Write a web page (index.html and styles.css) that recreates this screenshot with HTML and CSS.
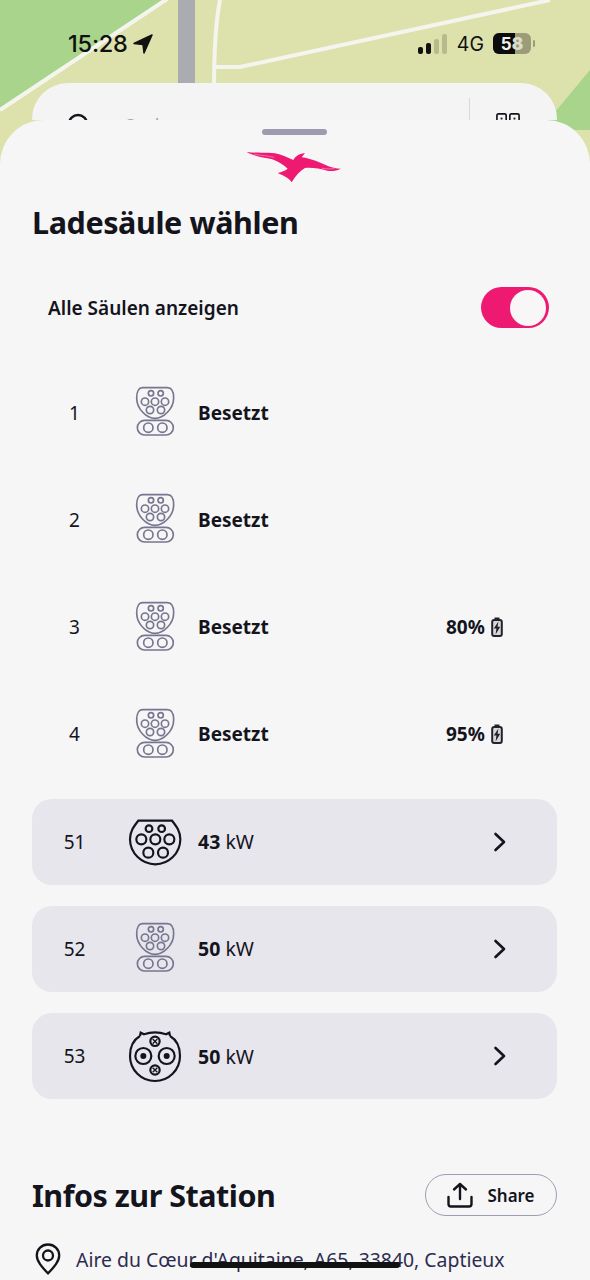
FILE: index.html
```html
<!DOCTYPE html>
<html lang="de">
<head>
<meta charset="utf-8">
<title>Ladesäule wählen</title>
<link rel="stylesheet" href="styles.css">
</head>
<body>
<svg class="defs" width="0" height="0" aria-hidden="true">
  <symbol id="combo" viewBox="0 0 150 165">
    <g fill="none" stroke="#77758f" stroke-width="5">
      <path d="M38 8H112C124 8 131 20 131 38C131 72 100 100 75 100C50 100 20 72 20 38C20 20 27 8 38 8Z"/>
      <circle cx="63" cy="25" r="8"/><circle cx="92" cy="25" r="8"/>
      <circle cx="45" cy="50" r="11"/><circle cx="75" cy="50" r="11"/><circle cx="105" cy="50" r="11"/>
      <circle cx="60" cy="75" r="11"/><circle cx="93" cy="75" r="11"/>
      <rect x="22" y="106" width="108" height="44" rx="22"/>
      <circle cx="55" cy="128" r="14"/><circle cx="97" cy="128" r="14"/>
    </g>
  </symbol>
  <symbol id="type2" viewBox="0 0 210 180">
    <g fill="none" stroke="#14141c" stroke-width="6.5">
      <path d="M55 26H156C170 44 181 58 181 82C181 124 146 157 106 157C66 157 30 124 30 82C30 58 41 44 55 26Z"/>
      <circle cx="87" cy="50" r="10"/><circle cx="125" cy="50" r="10"/>
      <circle cx="64" cy="82" r="15"/><circle cx="106" cy="82" r="15"/><circle cx="148" cy="82" r="15"/>
      <circle cx="85" cy="122" r="15"/><circle cx="129" cy="122" r="15"/>
    </g>
  </symbol>
  <symbol id="ccs" viewBox="0 0 210 180">
    <g fill="none" stroke="#14141c" stroke-width="6.5">
      <path d="M60 30C36 44 30 68 30 90C30 132 64 165 105 165C146 165 180 132 180 90C180 68 174 44 150 30"/>
      <path d="M60 30L62 20L72 25C92 18 118 18 138 25L148 20L150 30"/>
      <circle cx="105" cy="46" r="14"/><path d="M98 39L112 53M112 39L98 53" stroke-width="4"/>
      <circle cx="105" cy="132" r="14"/><path d="M98 125L112 139M112 125L98 139" stroke-width="4"/>
      <circle cx="70" cy="90" r="24"/><circle cx="140" cy="90" r="24"/>
    </g>
    <circle cx="70" cy="90" r="9" fill="#14141c"/><circle cx="140" cy="90" r="9" fill="#14141c"/>
  </symbol>
  <symbol id="chevron" viewBox="0 0 14 20">
    <path d="M2.5 2L11 10L2.5 18" fill="none" stroke="#14141c" stroke-width="2.6" stroke-linecap="round" stroke-linejoin="round"/>
  </symbol>
  <symbol id="charging" viewBox="0 0 12 20">
    <path d="M3.5 0.5H8.5V3H3.5Z" fill="#222228"/>
    <rect x="1.2" y="3" width="9.6" height="16" rx="2" fill="#d8d8dc" stroke="#222228" stroke-width="2"/>
    <path d="M7.4 4.5L2.8 11.5H5.4L4.6 17.5L9.2 9.8H6.6Z" fill="#222228"/>
  </symbol>
</svg>

<div class="phone">
  <svg class="map" viewBox="0 0 590 130" width="590" height="130" aria-hidden="true">
    <rect width="590" height="130" fill="#dde2ad"/>
    <path d="M0 0H165L0 110Z" fill="#a9d48b"/>
    <path d="M590 70L540 130H590Z" fill="#a9d48b"/>
    <path d="M167 -1L0 110" stroke="#f4f5ef" stroke-width="4" fill="none"/>
    <rect x="178" y="0" width="17" height="90" fill="#abacb2"/>
    <path d="M220 0C216 20 214 50 214 90M214 67H240L550 0" stroke="#f4f5ef" stroke-width="4" fill="none"/>
  </svg>

  <header class="status">
    <div class="status-left">
      <span class="time">15:28</span>
      <svg class="arrow" viewBox="0 0 20 20" width="20" height="20"><path d="M19 1L1 9.5L10 10.5L11 19Z" fill="#111" stroke="#111" stroke-width="1.5" stroke-linejoin="round"/></svg>
    </div>
    <div class="status-right">
      <div class="bars">
        <i class="bar on b1"></i><i class="bar on b2"></i><i class="bar b3"></i><i class="bar b4"></i>
      </div>
      <span class="net">4G</span>
      <div class="battery"><span class="battery-fill"></span><span class="battery-text">5<b>8</b></span></div>
      <i class="battery-nub"></i>
    </div>
  </header>

  <div class="search">
    <svg class="search-icon" viewBox="0 0 24 24" width="24" height="24"><circle cx="11" cy="11" r="9" fill="none" stroke="#14141c" stroke-width="2.4"/></svg>
    <span class="search-text">Suchen</span>
    <span class="search-div"></span>
    <svg class="qr-icon" viewBox="0 0 26 26" width="24" height="24"><g fill="none" stroke="#14141c" stroke-width="1.8"><rect x="1" y="1" width="10" height="10" rx="1.5"/><rect x="15" y="1" width="10" height="10" rx="1.5"/></g><rect x="5" y="5" width="2" height="2" fill="#14141c"/><rect x="19" y="5" width="2" height="2" fill="#14141c"/></svg>
  </div>

  <main class="sheet">
    <div class="handle"></div>
    <svg class="logo" viewBox="0 0 330 120" width="110" height="40" aria-hidden="true">
      <path d="M20 12C50 16 80 12 105 16C125 20 145 30 160 36C165 27 174 18 195 15L185 28C215 32 240 44 262 53C275 58 288 61 303 62C290 68 275 71 262 68C240 62 215 58 195 60C180 68 168 82 155 103C150 93 135 84 113 75C125 72 135 68 143 62C130 50 115 40 95 33C70 28 40 24 20 12Z" fill="#ee1a72"/>
      <path d="M42 19C65 22 85 24 103 28M245 61C258 63 272 63 284 62" fill="none" stroke="#f9c6dc" stroke-width="1.5"/>
    </svg>
    <h1 class="title">Ladesäule wählen</h1>

    <div class="toggle-row">
      <span class="toggle-label">Alle Säulen anzeigen</span>
      <span class="toggle"><i class="knob"></i></span>
    </div>

    <div class="list">
      <div class="row"><span class="num">1</span><svg class="plug"><use href="#combo"/></svg><span class="state">Besetzt</span></div>
      <div class="row"><span class="num">2</span><svg class="plug"><use href="#combo"/></svg><span class="state">Besetzt</span></div>
      <div class="row"><span class="num">3</span><svg class="plug"><use href="#combo"/></svg><span class="state">Besetzt</span><span class="soc">80%<svg class="soc-icon"><use href="#charging"/></svg></span></div>
      <div class="row"><span class="num">4</span><svg class="plug"><use href="#combo"/></svg><span class="state">Besetzt</span><span class="soc">95%<svg class="soc-icon"><use href="#charging"/></svg></span></div>
      <div class="row free"><span class="num">51</span><svg class="plug wide"><use href="#type2"/></svg><span class="power"><b>43</b> kW</span><svg class="chev"><use href="#chevron"/></svg></div>
      <div class="row free"><span class="num">52</span><svg class="plug"><use href="#combo"/></svg><span class="power"><b>50</b> kW</span><svg class="chev"><use href="#chevron"/></svg></div>
      <div class="row free"><span class="num">53</span><svg class="plug wide"><use href="#ccs"/></svg><span class="power"><b>50</b> kW</span><svg class="chev"><use href="#chevron"/></svg></div>
    </div>

    <div class="info-head">
      <h2 class="info-title">Infos zur Station</h2>
      <button class="share" type="button">
        <svg viewBox="0 0 26 26" width="26" height="26" aria-hidden="true"><path d="M13 17V2M7 7.5L13 2L19 7.5M1.5 15V22C1.5 23.5 2.5 24.5 4 24.5H22C23.5 24.5 24.5 23.5 24.5 22V15" fill="none" stroke="#14141c" stroke-width="2.4" stroke-linecap="round" stroke-linejoin="round"/></svg>
        <span>Share</span>
      </button>
    </div>
    <div class="address">
      <svg viewBox="0 0 26 32" width="26" height="32" aria-hidden="true"><path d="M13 30.5C7 24 1.8 18.5 1.8 12.5C1.8 6 6.8 1.5 13 1.5C19.2 1.5 24.2 6 24.2 12.5C24.2 18.5 19 24 13 30.5Z" fill="none" stroke="#14141c" stroke-width="2.3" stroke-linejoin="round"/><circle cx="13" cy="12.5" r="5" fill="none" stroke="#14141c" stroke-width="2.3"/></svg>
      <span>Aire du Cœur d'Aquitaine, A65, 33840, Captieux</span>
    </div>
  </main>
  <div class="home"></div>
</div>
</body>
</html>
```
FILE: styles.css
```css
* { box-sizing: border-box; }
html, body { margin: 0; padding: 0; }
body { width: 590px; height: 1280px; overflow: hidden; font-family: "Noto Sans", sans-serif; color: #14141c; }
.defs { position: absolute; }
.phone { position: relative; width: 590px; height: 1280px; overflow: hidden; background: #dde2ad; }
.map { position: absolute; left: 0; top: 0; display: block; }

.status { position: relative; height: 83px; display: flex; justify-content: space-between; padding: 30px 55px 0 68px; }
.status-left { display: flex; align-items: center; gap: 5px; height: 27px; }
.time { font-family: Inter, sans-serif; font-weight: 500; font-size: 23.5px; letter-spacing: -0.2px; color: #111; }
.status-right { display: flex; align-items: center; height: 27px; }
.bars { display: flex; align-items: flex-end; gap: 3px; margin-right: 10px; margin-left: -3px; }
.bar { display: block; width: 5px; border-radius: 2px; background: #b6bb8c; }
.bar.on { background: #111; }
.b1 { height: 7px; } .b2 { height: 11px; } .b3 { height: 15px; } .b4 { height: 20px; }
.net { font-family: Inter, sans-serif; font-size: 19.5px; color: #111; margin-right: 9px; }
.battery { position: relative; width: 38px; height: 21px; border-radius: 6px; background: #9a9d78; overflow: hidden; display: flex; align-items: center; justify-content: center; }
.battery-fill { position: absolute; left: 0; top: 0; bottom: 0; width: 58%; background: #0c0c0c; }
.battery-text { position: relative; font-family: Inter, sans-serif; font-weight: 700; font-size: 17px; color: #f4f4ee; }
.battery-text b { color: #dcdcc8; }
.battery-nub { display: block; width: 2px; height: 7px; background: #9a9d78; margin-left: 2px; border-radius: 1px; }

.search { position: relative; margin: 0 33px 0 32px; height: 37px; background: #f4f4f5; border-radius: 36px 36px 0 0; overflow: hidden; display: flex; align-items: flex-start; padding: 30px 37px 0 35px; }
.search-text { margin-left: 34px; font-size: 18px; color: #a6a6ad; flex: 1; }
.search-div { width: 1px; height: 37px; background: #d8d8de; margin-top: -15px; margin-right: 26px; }

.sheet { position: relative; height: 1160px; background: #f6f6f7; border-radius: 44px 44px 0 0; padding: 9px 33px 0 32px; }
.handle { width: 65px; height: 6px; border-radius: 3px; background: #9c9bb0; margin: 0 auto; }
.logo { display: block; margin: 13px auto 0; }
.title { margin: 12px 0 0; font-size: 30.5px; line-height: 44px; font-weight: 700; letter-spacing: -0.4px; color: #14141c; }

.toggle-row { display: flex; align-items: center; justify-content: space-between; margin-top: 43px; padding: 0 8px 0 16px; }
.toggle-label { font-size: 19px; font-weight: 600; }
.toggle { display: flex; justify-content: flex-end; align-items: center; width: 68px; height: 41px; padding: 0 3px; border-radius: 21px; background: #ee1a72; }
.knob { display: block; width: 36px; height: 36px; border-radius: 50%; background: #f8f6f7; }

.list { display: grid; grid-auto-rows: 86px; row-gap: 21.3px; margin-top: 41.5px; }
.row { display: flex; align-items: center; border-radius: 20px; }
.row.free { background: #e6e6ec; }
.num { width: 85px; text-align: center; font-size: 19px; }
.plug { width: 50px; height: 55px; margin: 0 18px 0 13px; flex: none; }
.plug.wide { width: 70px; height: 60px; margin: 0 8px 0 3px; }
.state { font-size: 19px; font-weight: 700; flex: 1; }
.power { font-size: 19.5px; flex: 1; }
.power b { font-weight: 700; }
.soc { display: flex; align-items: center; gap: 6px; width: 111px; font-size: 19px; font-weight: 700; }
.soc-icon { width: 12px; height: 20px; }
.chev { width: 14px; height: 20px; margin-right: 50px; }

.info-head { display: flex; align-items: center; justify-content: space-between; margin-top: 75px; }
.info-title { margin: 0; font-size: 30.5px; line-height: 42px; font-weight: 700; letter-spacing: -0.5px; }
.share { display: flex; align-items: center; justify-content: center; gap: 14px; width: 132px; height: 42px; padding: 0; border: 1.5px solid #9f9fb4; border-radius: 21px; background: transparent; font-family: "Noto Sans", sans-serif; font-size: 17px; font-weight: 600; color: #14141c; }
.address { display: flex; align-items: center; gap: 15px; margin-top: 27px; margin-left: 3px; font-size: 19.4px; color: #2e2c4e; white-space: nowrap; }

.home { position: absolute; left: 190px; top: 1262px; width: 210px; height: 6px; border-radius: 3px; background: #111; }
```
